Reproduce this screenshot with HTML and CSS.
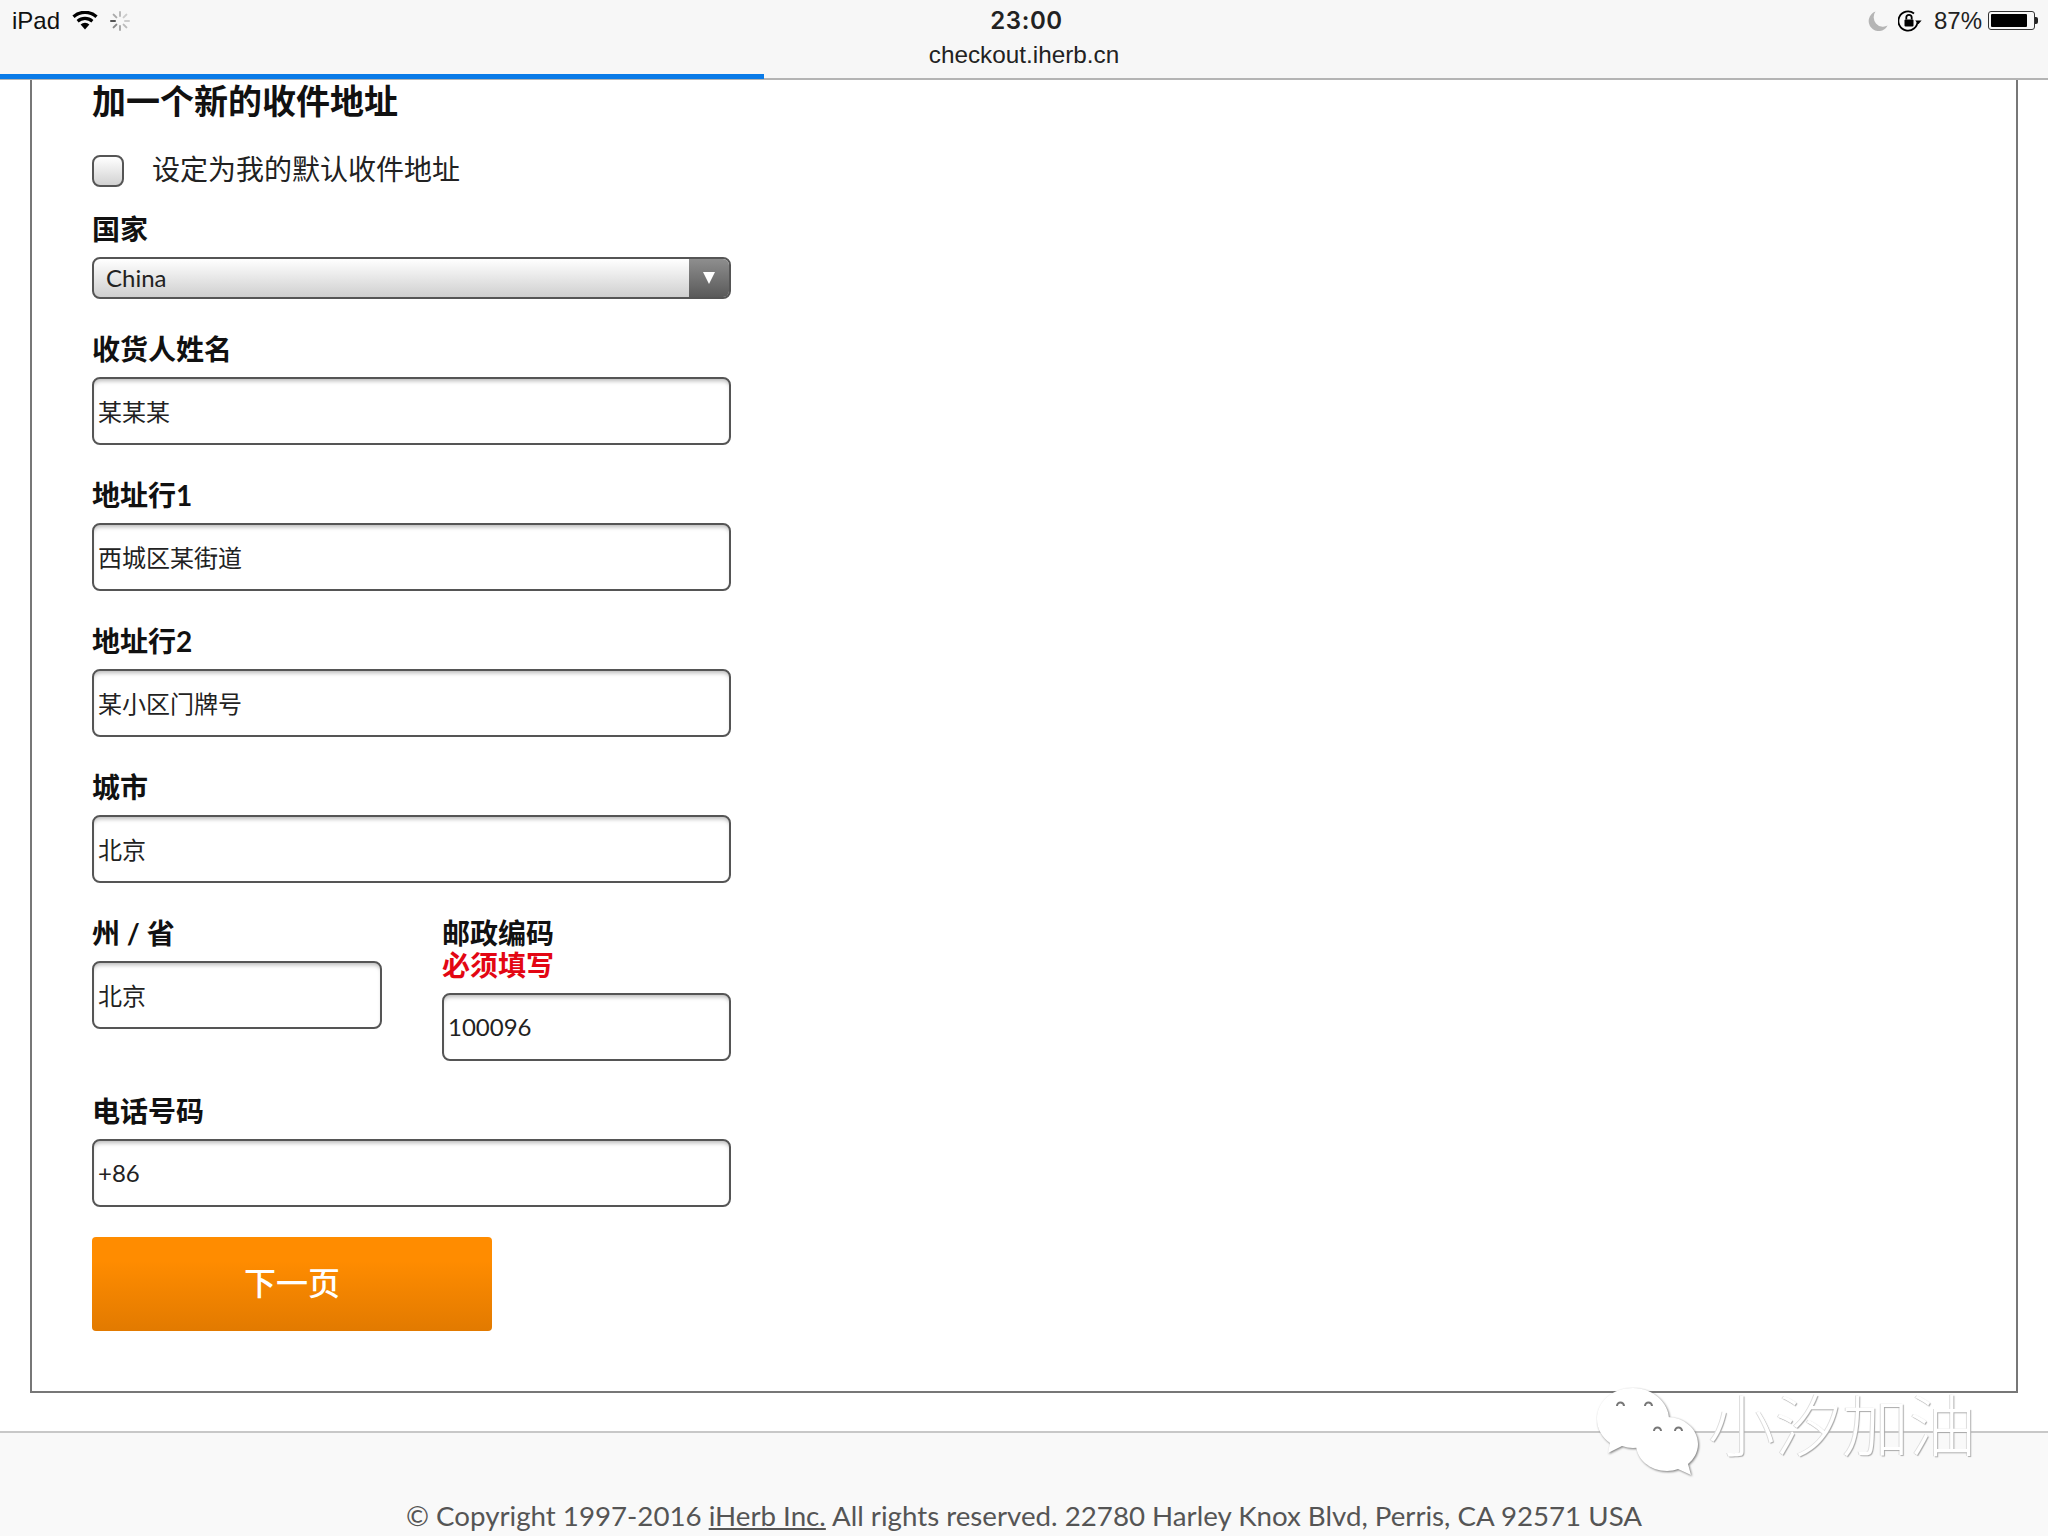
FILE: index.html
```html
<!DOCTYPE html>
<html lang="zh-CN">
<head>
<meta charset="utf-8">
<title>checkout.iherb.cn</title>
<link rel="stylesheet" href="styles.css">
</head>
<body>
<header class="browser">
  <div class="status">
    <div class="status-left">
      <span>iPad</span>
      <svg class="wifi" viewBox="0 0 26 19"><path d="M13 18.5 8.6 13.6a6.4 6.4 0 0 1 8.8 0Z"/><path d="M6.6 11.4 4.6 9.1a12.4 12.4 0 0 1 16.8 0l-2 2.3a9.4 9.4 0 0 0-12.8 0Z"/><path d="M2.6 7 .4 4.6a18.6 18.6 0 0 1 25.2 0L23.4 7a15.4 15.4 0 0 0-20.8 0Z"/></svg>
      <svg class="spinner" viewBox="0 0 22 22"><g stroke-width="2" stroke-linecap="round"><path stroke="#bbb" d="M11 2v4"/><path stroke="#ccc" d="m17.4 4.6-2.8 2.8"/><path stroke="#ccc" d="M20 11h-4"/><path stroke="#bbb" d="m17.4 17.4-2.8-2.8"/><path stroke="#aaa" d="M11 20v-4"/><path stroke="#888" d="m4.6 17.4 2.8-2.8"/><path stroke="#555" d="M2 11h4"/><path stroke="#aaa" d="m4.6 4.6 2.8 2.8"/></g></svg>
    </div>
    <div class="clock">23:00</div>
    <div class="status-right">
      <svg class="moon" viewBox="0 0 20 20"><path d="M7.5.6A10 10 0 1 0 19.6 14.6 9.5 9.5 0 0 1 7.5.6Z"/></svg>
      <svg class="lock" viewBox="0 0 24 22"><path class="lock-ring" d="M19.6 11A9.6 9.6 0 1 1 16 3.5"/><path d="m17.2 10.4 6.4 0-3.2 3.8Z"/><rect x="6.5" y="9.5" width="9" height="7" rx="1"/><path class="lock-ring" d="M8.3 9.5V7.6a2.7 2.7 0 0 1 5.4 0v1.9"/></svg>
      <span class="percent">87%</span>
      <div class="battery"><div class="battery-level"></div></div>
      <div class="battery-tip"></div>
    </div>
  </div>
  <div class="url">checkout.iherb.cn</div>
  <div class="progress"></div>
</header>

<main class="card">
  <h1 class="title">加一个新的收件地址</h1>
  <div class="check-row">
    <span class="checkbox"></span>
    <span class="check-label">设定为我的默认收件地址</span>
  </div>

  <div class="field field-select">
    <div class="label">国家</div>
    <div class="select">
      <span class="select-value">China</span>
      <span class="select-arrow"><i class="triangle"></i></span>
    </div>
  </div>
  <div class="field">
    <div class="label">收货人姓名</div>
    <div class="input">某某某</div>
  </div>
  <div class="field">
    <div class="label">地址行1</div>
    <div class="input">西城区某街道</div>
  </div>
  <div class="field">
    <div class="label">地址行2</div>
    <div class="input">某小区门牌号</div>
  </div>
  <div class="field">
    <div class="label">城市</div>
    <div class="input">北京</div>
  </div>
  <div class="two-col">
    <div class="field">
      <div class="label">州 / 省</div>
      <div class="input">北京</div>
    </div>
    <div class="field">
      <div class="label">邮政编码</div>
      <div class="label label-error">必须填写</div>
      <div class="input">100096</div>
    </div>
  </div>
  <div class="field">
    <div class="label">电话号码</div>
    <div class="input">+86</div>
  </div>
  <button class="next" type="button">下一页</button>
</main>

<footer class="footer">
  © Copyright 1997-2016 <a class="footer-link">iHerb Inc.</a> All rights reserved. 22780 Harley Knox Blvd, Perris, CA 92571 USA
</footer>

<div class="watermark">
  <svg class="wechat" viewBox="0 0 106 90">
    <path class="bubble" d="M37 2C17 2 1 15 1 33c0 10 5 18 13 24l-2 10 14-7c4 1 7 2 11 2 20 0 36-13 36-29S57 2 37 2Z"/>
    <path class="bubble" d="M71 31c-17 0-31 12-31 27s14 27 31 27c4 0 8-1 11-2l13 6-3-11c6-5 10-12 10-20 0-15-14-27-31-27Z"/>
    <g class="eyes">
      <path d="M21 20a3.5 3.5 0 0 1 7 0"/><path d="M49 20a3.5 3.5 0 0 1 7 0"/>
      <path d="M58 45a3.5 3.5 0 0 1 7 0"/><path d="M79 45a3.5 3.5 0 0 1 7 0"/>
    </g>
  </svg>
  <span class="watermark-text">小汐加油</span>
</div>
</body>
</html>
```
FILE: styles.css
```css
* { box-sizing: border-box; }
html, body { margin: 0; height: 1536px; overflow: hidden; background: #fff; }
body {
  position: relative;
  font-family: Lato, "Noto Sans CJK SC", sans-serif;
  color: #111;
}

.browser {
  position: relative;
  height: 80px;
  background: #f7f7f7;
  border-bottom: 2px solid #b4b4b4;
  font-family: "Liberation Sans", "Noto Sans CJK SC", sans-serif;
}
.status {
  display: grid;
  grid-template-columns: 1fr auto 1fr;
  align-items: center;
  height: 41px;
  padding: 0 10px 0 12px;
}
.status-left, .status-right { display: flex; align-items: center; font-size: 24px; }
.status-right { justify-content: flex-end; }
.wifi { width: 26px; height: 19px; margin-left: 12px; fill: #000; }
.spinner { width: 22px; height: 22px; margin-left: 11px; fill: none; }
.clock {
  margin-left: 3px;
  font-family: Inter, "Liberation Sans", sans-serif;
  font-size: 24px;
  font-weight: 600;
  letter-spacing: .6px;
  color: #222;
}
.moon { width: 20px; height: 20px; fill: #b5b5b5; }
.lock { width: 24px; height: 22px; margin-left: 10px; fill: #000; }
.lock-ring { fill: none; stroke: #000; stroke-width: 1.8; }
.percent { margin-left: 12px; color: #222; }
.battery {
  width: 47px;
  height: 19px;
  margin-left: 6px;
  padding: 2px;
  border: 1px solid #333;
  border-radius: 3px;
}
.battery-level { width: 87%; height: 100%; background: #000; border-radius: 1px; }
.battery-tip { width: 3px; height: 7px; background: #222; border-radius: 0 2px 2px 0; }
.url { text-align: center; font-size: 24.3px; line-height: 28px; color: #222; }
.progress {
  position: absolute;
  left: 0;
  bottom: -1px;
  width: 764px;
  height: 5px;
  background: #0a7be8;
}

.card {
  width: 1988px;
  height: 1314px;
  margin-left: 30px;
  padding: 0 60px;
  margin-top: -1px;
  border: 2px solid #777;
  border-top: 0;
}
.title { margin: 0; font-size: 34px; line-height: 44px; font-weight: 700; color: #111; }

.check-row { display: flex; align-items: center; height: 32px; margin-top: 32px; }
.checkbox {
  width: 32px;
  height: 32px;
  border: 2px solid #555;
  border-radius: 8px;
  background: linear-gradient(#fff, #d2d2d2);
}
.check-label { margin-left: 28px; padding-bottom: 4px; font-size: 28px; line-height: 32px; color: #222; }

.field { width: 639px; margin-bottom: 34px; }
.check-row + .field { margin-top: 26px; }
.label { font-size: 28px; line-height: 32px; font-weight: 700; color: #111; }
.label-error { color: #e30613; }
.label + .input { margin-top: 12px; }
.label + .select { margin-top: 12px; }

.select {
  display: flex;
  align-items: center;
  justify-content: space-between;
  height: 42px;
  border: 2px solid #555;
  border-radius: 8px;
  background: linear-gradient(#fff, #cfcfcf);
  overflow: hidden;
}
.select-value { padding: 0 0 2px 12px; font-size: 24px; color: #222; }
.select-arrow {
  display: flex;
  align-items: center;
  justify-content: center;
  width: 40px;
  height: 100%;
  background: linear-gradient(#8e8e8e, #5a5a5a);
}
.triangle {
  width: 0;
  height: 0;
  border-left: 6px solid transparent;
  border-right: 6px solid transparent;
  border-top: 12px solid #fff;
}

.input {
  display: flex;
  align-items: center;
  height: 68px;
  padding: 0 4px 1px;
  border: 2px solid #555;
  border-radius: 8px;
  background: #fff;
  box-shadow: inset 0 4px 4px -2px rgba(0, 0, 0, .28);
  font-size: 24px;
  color: #222;
}

.two-col {
  display: grid;
  grid-template-columns: 290px 289px;
  column-gap: 60px;
  width: 639px;
  align-items: start;
}
.two-col .field { width: auto; }

.next {
  display: block;
  width: 400px;
  height: 94px;
  margin-top: -4px;
  padding: 0 0 6px;
  border: 0;
  border-radius: 4px;
  background: linear-gradient(#ff8c00 25%, #e27a00);
  color: #fff;
  font-family: inherit;
  font-size: 32px;
  font-weight: 500;
}

.footer {
  height: 105px;
  margin-top: 38px;
  padding-top: 63px;
  background: #f9f9f9;
  border-top: 2px solid #c8c8c8;
  text-align: center;
  font-size: 27.7px;
  line-height: 40px;
  color: #555;
}
.footer-link { text-decoration: underline; }

.watermark {
  position: absolute;
  left: 1596px;
  top: 1386px;
  display: flex;
  align-items: center;
}
.wechat { width: 106px; height: 90px; filter: drop-shadow(1px 1px 1px #777); }
.bubble { fill: #fff; }
.eyes path { fill: none; stroke: #777; stroke-width: 2; }
.watermark-text {
  margin-left: 6px;
  margin-top: -19px;
  font-family: "Noto Sans CJK SC", sans-serif;
  font-size: 67px;
  line-height: 74px;
  font-weight: 300;
  color: #fff;
  text-shadow: 1px 1px 1px #aaa, -1px 0 0 #ddd;
}
```
